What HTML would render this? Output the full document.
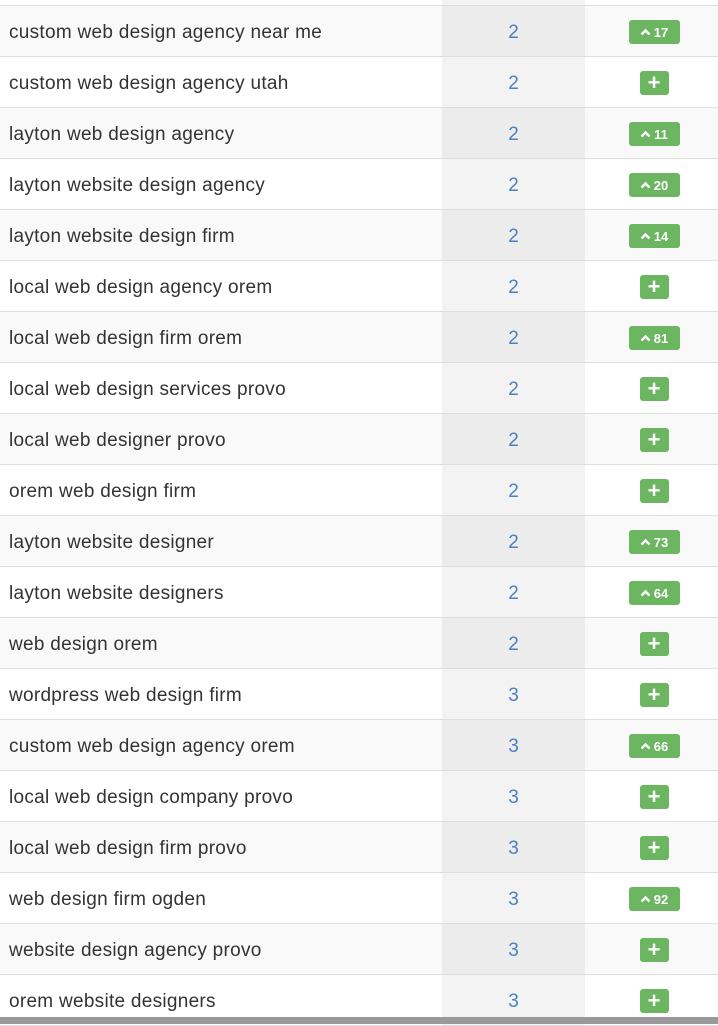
<!DOCTYPE html><html><head><style>
body{margin:0;width:718px;height:1024px;overflow:hidden;background:#fff;font-family:"Liberation Sans",Helvetica,sans-serif;position:relative}
.top{height:5px;background:#fff;border-bottom:1px solid #ddd;position:relative}
.top:after{content:"";position:absolute;left:442px;width:143px;top:0;height:5px;background:#f3f3f3}
.r{height:50px;border-bottom:1px solid #ddd;display:flex;align-items:center;position:relative}
.k{width:442px;padding-left:9px;padding-top:4px;box-sizing:border-box;font-size:19px;letter-spacing:0.28px;color:#333}
.n{width:143px;height:100%;padding-top:4px;box-sizing:border-box;display:flex;align-items:center;justify-content:center;font-size:19px;color:#4a80c3}
.c{flex:1;display:flex;justify-content:center;padding-left:5px;padding-top:2px}
.b{background:#6cb662;color:#fff;border-radius:3px;height:24px;display:flex;align-items:center;justify-content:center;font-size:13px;font-weight:bold;box-sizing:border-box}
.p{width:29px;font-size:22px}
.u{width:51px;gap:3px}
.u svg{width:11px;height:8px}
.bot{position:absolute;left:0;right:0;top:1017px;bottom:0;background:#9a9a9a}
</style></head><body>
<div class="top"></div>
<div id="t"></div>
<div class="bot"></div>
<script>
var d=[["custom web design agency near me",2,17],["custom web design agency utah",2,0],["layton web design agency",2,11],["layton website design agency",2,20],["layton website design firm",2,14],["local web design agency orem",2,0],["local web design firm orem",2,81],["local web design services provo",2,0],["local web designer provo",2,0],["orem web design firm",2,0],["layton website designer",2,73],["layton website designers",2,64],["web design orem",2,0],["wordpress web design firm",3,0],["custom web design agency orem",3,66],["local web design company provo",3,0],["local web design firm provo",3,0],["web design firm ogden",3,92],["website design agency provo",3,0],["orem website designers",3,0]];
var h="<div>";d.forEach(function(x,i){h+='<div class="r" style="background:'+(i%2==0?'#f9f9f9':'#fff')+'"><div class="k">'+x[0]+'</div><div class="n" style="background:'+(i%2==0?'#ececec':'#f3f3f3')+'">'+x[1]+'</div><div class="c">'+(x[2]?'<div class="b u"><svg viewBox="0 0 11 8"><path d="M1.5 6.5L5.5 2.5L9.5 6.5" stroke="#fff" stroke-width="2.4" fill="none"/></svg>'+x[2]+'</div>':'<div class="b p">+</div>')+'</div></div>'});
document.getElementById("t").innerHTML=h+"</div>";
</script>
</body></html>
